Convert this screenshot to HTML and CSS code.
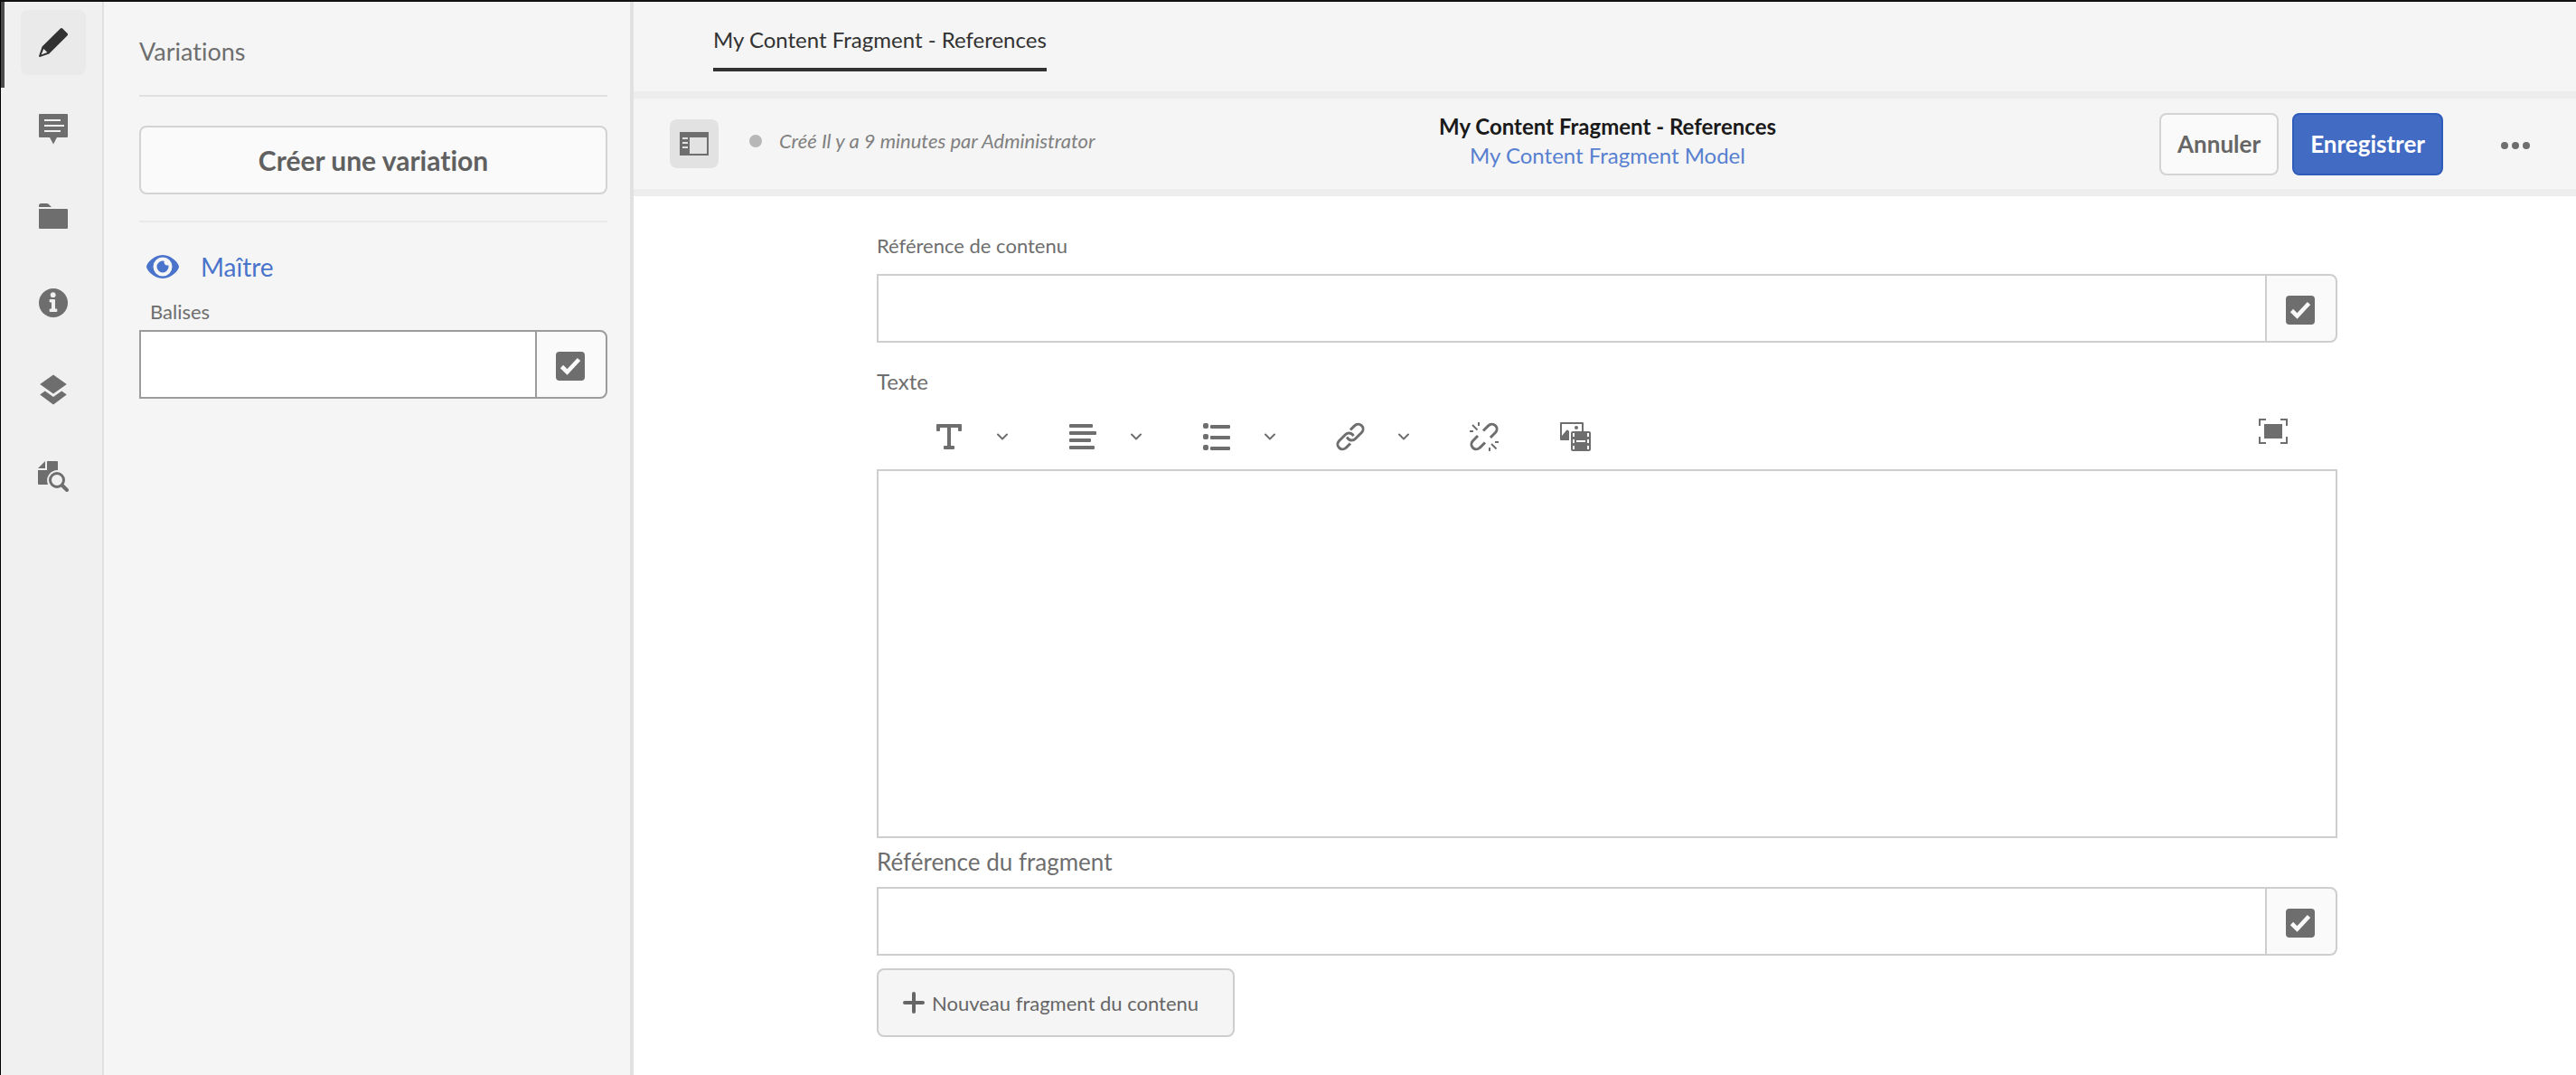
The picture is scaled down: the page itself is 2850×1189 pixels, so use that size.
FILE: index.html
```
<!DOCTYPE html>
<html lang="fr">
<head>
<meta charset="utf-8">
<meta name="viewport" content="width=device-width, initial-scale=1">
<title>My Content Fragment - References</title>
<link rel="stylesheet" href="styles.css">
</head>
<body>
<svg class="sprite" aria-hidden="true">
  <symbol id="icon-check" viewBox="0 0 32 32">
    <rect width="32" height="32" rx="4" fill="currentColor"/>
    <path d="M6.500 16.500l6 6L25.500 8.500" fill="none" stroke="#fafafa" stroke-width="4.600"/>
  </symbol>
  <symbol id="icon-chevron" viewBox="0 0 12 8">
    <path d="M1 1.500l5 5 5-5" fill="none" stroke="currentColor" stroke-width="2" stroke-linecap="round" stroke-linejoin="round"/>
  </symbol>
</svg>
<div class="app">
  <nav class="rail" aria-label="Éditeur">
    <button class="rail-item is-selected" type="button" aria-label="Modifier">
      <svg width="32" height="32" viewBox="0 0 32 32"><path fill="currentColor" fill-rule="evenodd" d="M23.600.700a2 2 0 0 1 2.800 0l5 5a2 2 0 0 1 0 2.800L11.300 28.400 1.200 31.900Q-.2 32.200.1 30.800L3.600 20.600zM5.300 23L2.600 29.500 9.400 27.100Z"/></svg>
    </button>
    <button class="rail-item" type="button" aria-label="Annotations">
      <svg width="32" height="34" viewBox="0 0 32 34"><path fill="currentColor" d="M1 0h30a1 1 0 0 1 1 1v24a1 1 0 0 1-1 1H20l-4 7.500L12 26H1a1 1 0 0 1-1-1V1a1 1 0 0 1 1-1z"/><path stroke="#f0f0f0" stroke-width="2" d="M6 7h18M6 13h22M6 19h18"/></svg>
    </button>
    <button class="rail-item" type="button" aria-label="Contenu associé">
      <svg width="32" height="28" viewBox="0 0 32 28"><path fill="currentColor" d="M0 4V2.500A2.500 2.500 0 0 1 2.500 0H9q1.500 0 2.500 1.500L14 4zM0 6h31a1 1 0 0 1 1 1v20a1 1 0 0 1-1 1H1a1 1 0 0 1-1-1z"/></svg>
    </button>
    <button class="rail-item" type="button" aria-label="Métadonnées">
      <svg width="32" height="32" viewBox="0 0 32 32"><circle cx="16" cy="16" r="16" fill="currentColor"/><circle cx="15.700" cy="7.200" r="2.900" fill="#f0f0f0"/><path fill="#f0f0f0" d="M12.500 12H17a1 1 0 0 1 1 1v9.500h1.500a.8.8 0 0 1 .8.8v2a.8.8 0 0 1-.8.8h-7a.8.8 0 0 1-.8-.8v-2a.8.8 0 0 1 .8-.8H14v-7h-1.500a.8.8 0 0 1-.8-.8v-1.900a.8.8 0 0 1 .8-.8z"/></svg>
    </button>
    <button class="rail-item" type="button" aria-label="Arborescence">
      <svg width="30" height="34" viewBox="0 0 30 34"><path fill="currentColor" d="M15 .5L29.800 11 15 21.500.2 11zM5.800 18.500L15 25l9.200-6.500 5.600 4L15 33.500.2 22.500z"/></svg>
    </button>
    <button class="rail-item" type="button" aria-label="Aperçu">
      <svg width="34" height="34" viewBox="0 0 34 34"><path fill="currentColor" d="M8 0v8H0zM10 0h11a1 1 0 0 1 1 1v9A11.500 11.500 0 0 0 11 26H1a1 1 0 0 1-1-1V10h10z"/><circle cx="21" cy="21" r="7.500" fill="none" stroke="currentColor" stroke-width="3"/><path d="M27 27l5 5" stroke="currentColor" stroke-width="4" stroke-linecap="round"/></svg>
    </button>
  </nav>

  <aside class="panel">
    <h2 class="panel-title">Variations</h2>
    <div class="panel-action">
      <button class="button button-wide" type="button">Créer une variation</button>
    </div>
    <a class="variation" href="#maitre">
      <svg width="36" height="26" viewBox="0 0 36 26"><path fill="currentColor" fill-rule="evenodd" d="M18 0C28 0 36 9.500 36 13S28 26 18 26 0 16.500 0 13 8 0 18 0zM18 2.500a10.500 10.500 0 1 0 0 21 10.500 10.500 0 1 0 0-21z"/><path fill="currentColor" d="M18 6.500a6.500 6.500 0 1 0 6.500 6.500q0-1-.3-1.800a3.500 3.500 0 0 1-4.500-4.500Q19 6.500 18 6.500z"/></svg>
      <span>Maître</span>
    </a>
    <div class="field field-tags">
      <label class="label label-tags" for="tags">Balises</label>
      <div class="picker picker-dark">
        <input id="tags" type="text">
        <button type="button" aria-label="Choisir des balises"><svg width="32" height="32"><use href="#icon-check"/></svg></button>
      </div>
    </div>
  </aside>

  <main class="main">
    <nav class="tabs" aria-label="Fragments ouverts">
      <a class="tab" href="#fragment">My Content Fragment - References</a>
    </nav>
    <header class="bar">
      <div class="bar-start">
        <button class="toggle" type="button" aria-label="Panneau latéral">
          <svg width="32" height="26" viewBox="0 0 32 26"><path fill="currentColor" fill-rule="evenodd" d="M0 0h32v26H0zM11 6v18h19V6z"/><path stroke="#e2e2e2" stroke-width="2" d="M3 7h6M3 12h6M3 17h6"/></svg>
        </button>
        <p class="status"><span class="dot"></span>Créé Il y a 9 minutes par Administrator</p>
      </div>
      <div class="heading">
        <h1>My Content Fragment - References</h1>
        <a href="#model">My Content Fragment Model</a>
      </div>
      <div class="bar-end">
        <button class="button" type="button">Annuler</button>
        <button class="button button-primary" type="button">Enregistrer</button>
        <button class="more" type="button" aria-label="Plus">
          <svg width="32" height="8" viewBox="0 0 32 8" fill="currentColor"><circle cx="4" cy="4" r="4"/><circle cx="16" cy="4" r="4"/><circle cx="28" cy="4" r="4"/></svg>
        </button>
      </div>
    </header>

    <form class="form">
      <div class="field">
        <label class="label label-content" for="content-ref">Référence de contenu</label>
        <div class="picker">
          <input id="content-ref" type="text">
          <button type="button" aria-label="Choisir un contenu"><svg width="32" height="32"><use href="#icon-check"/></svg></button>
        </div>
      </div>

      <div class="field field-text">
        <label class="label label-text" for="text">Texte</label>
        <div class="toolbar" role="toolbar" aria-label="Mise en forme">
          <div class="tools">
            <button class="tool" type="button" aria-label="Format">
              <span class="glyph"><svg width="28" height="28" viewBox="0 0 28 28"><path fill="currentColor" d="M1 0h26a1 1 0 0 1 1 1v6a1 1 0 0 1-1 1h-2a1 1 0 0 1-1-1V4h-8v20h3a1 1 0 0 1 1 1v2a1 1 0 0 1-1 1H9a1 1 0 0 1-1-1v-2a1 1 0 0 1 1-1h3V4H4v3a1 1 0 0 1-1 1H1a1 1 0 0 1-1-1V1a1 1 0 0 1 1-1z"/></svg></span>
              <svg width="12" height="8"><use href="#icon-chevron"/></svg>
            </button>
            <button class="tool" type="button" aria-label="Alignement">
              <span class="glyph"><svg width="30" height="28" viewBox="0 0 30 28" fill="currentColor"><rect width="26" height="4" rx="1"/><rect y="8" width="30" height="4" rx="1"/><rect y="16" width="24" height="4" rx="1"/><rect y="24" width="28" height="4" rx="1"/></svg></span>
              <svg width="12" height="8"><use href="#icon-chevron"/></svg>
            </button>
            <button class="tool" type="button" aria-label="Listes">
              <span class="glyph"><svg width="30" height="30" viewBox="0 0 30 30" fill="currentColor"><rect width="6" height="6" rx="2"/><rect y="12" width="6" height="6" rx="2"/><rect y="24" width="6" height="6" rx="2"/><rect x="8" y="2" width="22" height="4" rx="1"/><rect x="8" y="14" width="22" height="4" rx="1"/><rect x="8" y="26" width="22" height="4" rx="1"/></svg></span>
              <svg width="12" height="8"><use href="#icon-chevron"/></svg>
            </button>
            <button class="tool" type="button" aria-label="Lien">
              <span class="glyph"><svg width="32" height="32" viewBox="0 0 32 32" fill="none" stroke="currentColor" stroke-width="3"><path d="M16 8.500L20.600 3.900A5.200 5.200 0 0 1 28.600 11.300L21.300 18.500A5.300 5.300 0 0 1 13.300 18L12 16.600"/><path d="M16 23.500L11.400 28.100A5.200 5.200 0 0 1 3.400 20.700L10.700 13.500A5.300 5.300 0 0 1 18.700 14L19.500 15.200"/></svg></span>
              <svg width="12" height="8"><use href="#icon-chevron"/></svg>
            </button>
            <button class="tool" type="button" aria-label="Supprimer le lien">
              <span class="glyph"><svg width="32" height="32" viewBox="0 0 32 32" fill="none" stroke="currentColor" stroke-width="3"><path d="M15 9.500L20.600 3.900A5.200 5.200 0 0 1 28.600 11.300L23 17"/><path d="M17 22.500L11.400 28.100A5.200 5.200 0 0 1 3.400 20.700L9 15"/><path stroke-width="2" d="M10 0v4M0 10h4M3 3l5.500 5.500M22 28v4M28 22h4M24 24l5.500 5.500"/></svg></span>
            </button>
            <button class="tool" type="button" aria-label="Insérer un média">
              <span class="glyph"><svg width="34" height="32" viewBox="0 0 34 32"><path fill="currentColor" fill-rule="evenodd" d="M1 0h24a1 1 0 0 1 1 1v9h-2V2H2v13l5-6q1-.9 2 0l1 1v10H1a1 1 0 0 1-1-1V1a1 1 0 0 1 1-1z"/><circle cx="18" cy="6" r="2" fill="currentColor"/><rect x="12" y="10" width="22" height="22" rx="2" fill="currentColor"/><path fill="#fff" d="M14 12h2v4h-2zM14 19h2v4h-2zM14 26h2v4h-2zM30 12h2v4h-2zM30 19h2v4h-2zM30 26h2v4h-2zM18 20h10v2H18z"/></svg></span>
            </button>
          </div>
          <button class="fullscreen" type="button" aria-label="Plein écran">
            <svg width="32" height="28" viewBox="0 0 32 28"><path fill="none" stroke="currentColor" stroke-width="2" d="M1 8V1h7M24 1h7v7M31 20v7h-7M8 27H1v-7"/><path fill="currentColor" d="M6 6h20v16H6z"/></svg>
          </button>
        </div>
        <textarea id="text"></textarea>
      </div>

      <div class="field field-fragment">
        <label class="label label-fragment" for="fragment-ref">Référence du fragment</label>
        <div class="picker">
          <input id="fragment-ref" type="text">
          <button type="button" aria-label="Choisir un fragment"><svg width="32" height="32"><use href="#icon-check"/></svg></button>
        </div>
      </div>
      <button class="add" type="button">
        <svg width="24" height="24" viewBox="0 0 24 24"><path d="M12 2v20M2 12h20" stroke="currentColor" stroke-width="4" stroke-linecap="round"/></svg>
        Nouveau fragment du contenu
      </button>
    </form>
  </main>
</div>
</body>
</html>
```
FILE: styles.css
```
* { box-sizing: border-box; }

body {
  margin: 0;
  background: #fff;
  color: #6e6e6e;
  font-family: Lato, "Noto Sans", sans-serif;
  font-variant-ligatures: none;
}

h1, h2, p { margin: 0; }
a { color: inherit; text-decoration: none; }
svg { display: block; flex: none; }
button, input, textarea { margin: 0; padding: 0; border: 0; border-radius: 0; background: none; color: inherit; font: inherit; font-variant-ligatures: none; }
button { cursor: pointer; }

.sprite { position: absolute; width: 0; height: 0; }

.app {
  display: grid;
  grid-template-columns: 115px 586px minmax(0, 1fr);
  min-height: 100vh;
  border-top: 2px solid #111;
}

/* Icon rail */
.rail {
  position: relative;
  display: flex;
  flex-direction: column;
  gap: 24px;
  padding: 9px 0 0 22px;
  border-left: 1px solid #000;
  border-right: 2px solid #e1e1e1;
  background: #f0f0f0;
}
.rail-item {
  display: flex;
  align-items: center;
  justify-content: center;
  width: 72px;
  height: 72px;
  border-radius: 8px;
}
.rail-item.is-selected { background: #eaeaea; color: #323232; }
.rail-item.is-selected::before {
  content: "";
  position: absolute;
  top: 0;
  left: 0;
  width: 4px;
  height: 95px;
  background: #4b4b4b;
}

/* Variations panel */
.panel {
  padding: 39px 25px 0 39px;
  border-right: 4px solid #e1e1e1;
  background: #f5f5f5;
}
.panel-title {
  padding-bottom: 32px;
  border-bottom: 2px solid #e1e1e1;
  font-size: 27px;
  font-weight: 400;
  line-height: 32px;
}
.panel-action {
  padding: 32px 0 29px;
  border-bottom: 2px solid #eaeaea;
}
.variation {
  display: flex;
  align-items: center;
  gap: 24px;
  margin-top: 32px;
  padding-left: 8px;
  color: #4a74cb;
  font-size: 28px;
  line-height: 34px;
}

/* Buttons */
.button {
  height: 69px;
  padding: 0 18px;
  border: 2px solid #d3d3d3;
  border-radius: 8px;
  background: #fafafa;
  color: #666;
  font-size: 26px;
  font-weight: 700;
}
.button-wide {
  display: block;
  width: 100%;
  height: 76px;
  color: #606060;
  font-size: 30px;
}
.button-primary {
  border-color: #2f5cba;
  background: #426bc4;
  color: #fff;
}

/* Fields */
.field { display: flex; flex-direction: column; }
.field-tags { margin-top: 20px; }
.field-text { margin-top: 29px; }
.field-fragment { margin-top: 10px; }
.label { align-self: flex-start; }
.label-tags { padding: 0 0 7px 12px; font-size: 22px; line-height: 26px; }
.label-content { padding-bottom: 18px; font-size: 22px; line-height: 26px; }
.label-text { font-size: 24px; line-height: 28px; }
.label-fragment { padding-bottom: 12px; font-size: 26px; line-height: 32px; }

.picker {
  display: flex;
  height: 76px;
  border: 2px solid #cecece;
  border-radius: 0 8px 8px 0;
  background: #fafafa;
}
.picker input {
  flex: 1;
  min-width: 0;
  padding: 0 20px;
  background: #fff;
  font-size: 26px;
}
.picker button {
  display: flex;
  align-items: center;
  justify-content: center;
  width: 78px;
  padding: 4px 2px 0 0;
  border-left: 2px solid #cecece;
}
.picker-dark, .picker-dark button { border-color: #9c9c9c; }

/* Main area */
.main { display: flex; flex-direction: column; min-width: 0; }
.tabs {
  display: flex;
  align-items: flex-start;
  height: 107px;
  padding: 28px 88px 0;
  border-bottom: 8px solid #ededed;
  background: #f5f5f5;
}
.tab {
  padding-bottom: 17px;
  border-bottom: 4px solid #323232;
  color: #323232;
  font-size: 24px;
  line-height: 28px;
}

.bar {
  display: grid;
  grid-template-columns: 1fr auto 1fr;
  align-items: center;
  height: 108px;
  padding: 0 34px 0 40px;
  border-bottom: 8px solid #ededed;
  background: #f5f5f5;
}
.bar-start { display: flex; align-items: center; gap: 34px; }
.toggle {
  display: flex;
  align-items: center;
  justify-content: center;
  width: 54px;
  height: 54px;
  border-radius: 8px;
  background: #e2e2e2;
}
.status {
  display: flex;
  align-items: center;
  gap: 19px;
  padding-bottom: 6px;
  color: #808080;
  font-size: 22px;
  font-style: italic;
  line-height: 26px;
}
.dot { width: 14px; height: 14px; border-radius: 50%; background: #b7b7b7; }
.heading {
  padding-bottom: 6px;
  font-size: 24px;
  line-height: 32px;
  text-align: center;
}
.heading h1 { color: #1a1a1a; font-size: 24px; font-weight: 700; }
.heading a { display: block; color: #5780d0; }
.bar-end { display: flex; align-items: center; justify-content: flex-end; gap: 15px; }
.more {
  display: flex;
  align-items: center;
  justify-content: center;
  width: 66px;
  height: 66px;
  padding-top: 4px;
  margin-left: 32px;
}

.form { padding: 42px 264px 42px 269px; }
.toolbar {
  display: flex;
  justify-content: space-between;
  height: 83px;
  padding: 11px 55px 0 62px;
}
.tools { display: flex; gap: 65px; }
.tool { display: flex; align-items: center; gap: 35px; }
.glyph { display: flex; justify-content: center; width: 36px; }
.fullscreen { margin-bottom: 12px; }

textarea {
  display: block;
  width: 100%;
  height: 408px;
  padding: 20px;
  border: 2px solid #cecece;
  background: #fff;
  font-size: 26px;
  resize: none;
}

.add {
  display: flex;
  align-items: center;
  gap: 8px;
  height: 76px;
  margin-top: 14px;
  padding: 0 38px 0 27px;
  border: 2px solid #cecece;
  border-radius: 8px;
  background: #f5f5f5;
  color: #666;
  font-size: 22px;
}
```
